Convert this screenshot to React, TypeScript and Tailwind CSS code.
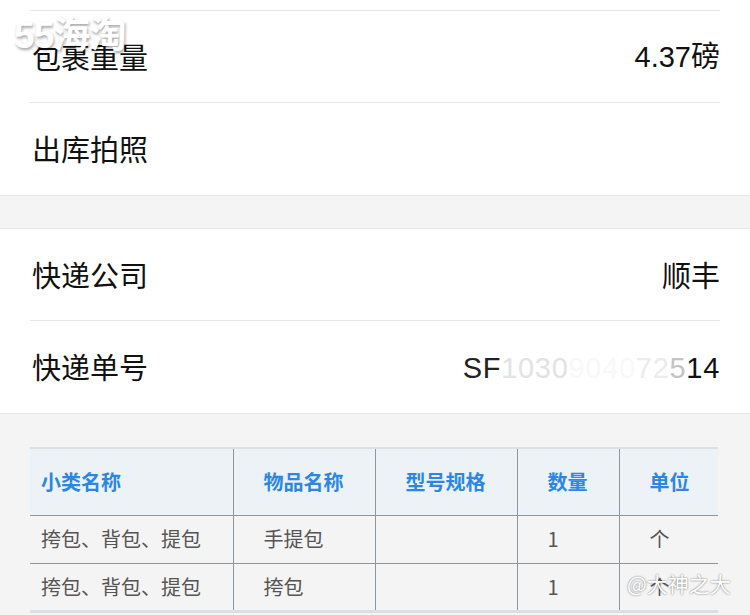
import React from "react";

const font = { fontFamily: '"Noto Sans CJK SC", "Noto Sans", sans-serif' };
const latin = { fontFamily: '"Liberation Sans", "Noto Sans CJK SC", sans-serif' };

type Row = { label: string; value?: React.ReactNode };

function InfoRow({ label, value, last }: Row & { last?: boolean }) {
  return (
    <div className="px-[30px]">
      <div
        className={`flex items-center justify-between h-[92px] ${
          last ? "" : "border-b border-[#e6e6e6]"
        }`}
      >
        <span className="text-[29px] text-[#111] pl-[2px]">{label}</span>
        {value !== undefined && <span className="text-[29px] text-[#111]">{value}</span>}
      </div>
    </div>
  );
}

const items = [
  { cat: "挎包、背包、提包", name: "手提包", spec: "", qty: "1", unit: "个" },
  { cat: "挎包、背包、提包", name: "挎包", spec: "", qty: "1", unit: "个" },
];

function TrackingNo() {
  return (
    <span style={latin} className="tracking-[0.7px]">
      <span className="text-[#222]">SF</span>
      <span className="text-[#e2e2e2]">1030</span>
      <span className="text-[#f8f8f8]">9040</span>
      <span className="text-[#ececec]">72</span>
      <span className="text-[#c4c4c4]">5</span>
      <span className="text-[#111]">14</span>
    </span>
  );
}

const cell = "pl-[30px] border-l border-[#8c969e]";

export default function App() {
  return (
    <div className="relative w-[750px] h-[615px] overflow-hidden bg-[#f4f4f4]" style={font}>
      <div className="bg-white border-b border-[#e6e6e6] pt-[10px]">
        <div className="mx-[30px] border-t border-[#e6e6e6]" />
        <InfoRow
          label="包裹重量"
          value={
            <>
              <span style={latin}>4.37</span>磅
            </>
          }
        />
        <InfoRow label="出库拍照" last />
      </div>

      <div className="h-[32px]" />

      <div className="bg-white border-y border-[#e6e6e6]">
        <InfoRow label="快递公司" value="顺丰" />
        <InfoRow label="快递单号" value={<TrackingNo />} last />
      </div>

      <div className="px-[30px] pt-[33px]">
        <table className="w-[688px] border-collapse text-[20px] table-fixed">
          <colgroup>
            <col className="w-[203px]" />
            <col className="w-[142px]" />
            <col className="w-[142px]" />
            <col className="w-[102px]" />
            <col className="w-[99px]" />
          </colgroup>
          <thead>
            <tr className="bg-[#edf2f7] border-t-2 border-[#d8e0e8] h-[67px]">
              {["小类名称", "物品名称", "型号规格", "数量", "单位"].map((h, i) => (
                <th
                  key={h}
                  className={`text-left font-bold text-[#2a87e5] ${
                    i === 0 ? "pl-[11px]" : cell
                  }`}
                >
                  {h}
                </th>
              ))}
            </tr>
          </thead>
          <tbody>
            {items.map((r, idx) => (
              <tr
                key={idx}
                className={`border-t border-[#8c969e] text-[#555] ${
                  idx === 0 ? "h-[48px]" : "h-[47px]"
                }`}
              >
                <td className="pl-[11px]">{r.cat}</td>
                <td className={cell}>{r.name}</td>
                <td className={cell}>{r.spec}</td>
                <td className={cell}>{r.qty}</td>
                <td className={cell}>{r.unit}</td>
              </tr>
            ))}
          </tbody>
        </table>
        <div className="w-[688px] h-[3px] bg-[#d8e0e8]" />
      </div>

      {/* watermarks */}
      <div
        className="absolute left-[14px] top-[8px] text-[37px] font-bold text-white tracking-tight"
        style={{ ...latin, textShadow: "1px 2px 3px rgba(0,0,0,0.35)" }}
      >
        55海淘
      </div>
      <div
        className="absolute left-[627px] top-[568px] text-[21px] text-white"
        style={{ textShadow: "0 0 2px rgba(0,0,0,0.6)" }}
      >
        @大神之大
      </div>
    </div>
  );
}
